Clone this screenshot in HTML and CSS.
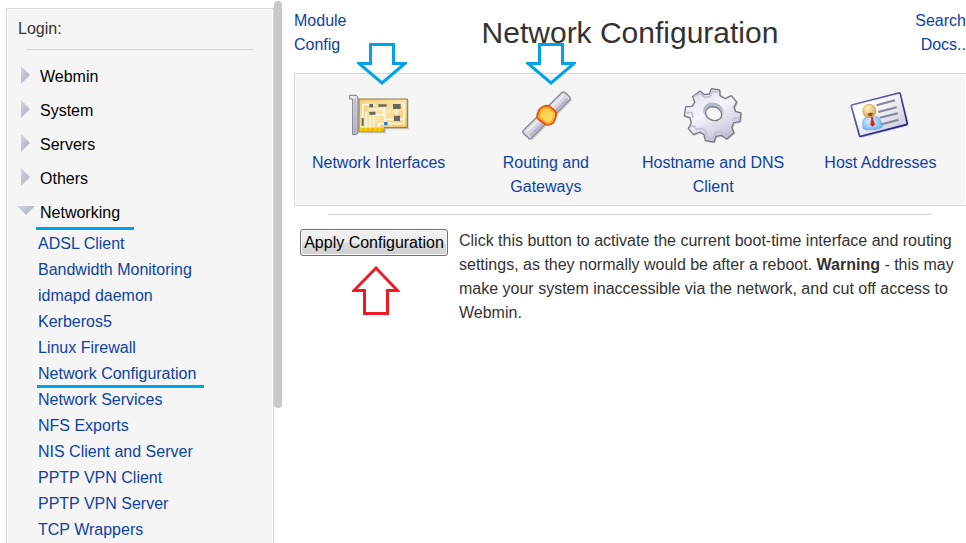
FILE: index.html
```html
<!DOCTYPE html>
<html lang="en">
<head>
    <meta charset="UTF-8">
    <meta name="viewport" content="width=device-width, initial-scale=1.0">
    <title>Network Configuration</title>
    <link rel="stylesheet" href="styles.css">
</head>
<body>
    <svg class="defs" width="0" height="0" aria-hidden="true">
        <defs>
            <linearGradient id="tri" x1="0" y1="0" x2="1" y2="1">
                <stop offset="0" stop-color="#d3d5df"/>
                <stop offset="1" stop-color="#a9adc0"/>
            </linearGradient>
            <linearGradient id="board" x1="0" y1="0" x2="1" y2="1">
                <stop offset="0" stop-color="#f5cf75"/>
                <stop offset="0.5" stop-color="#fae3a6"/>
                <stop offset="1" stop-color="#efbd55"/>
            </linearGradient>
            <linearGradient id="metal" x1="0" y1="0" x2="1" y2="1">
                <stop offset="0" stop-color="#f8f8fc"/>
                <stop offset="1" stop-color="#b4b4c8"/>
            </linearGradient>
            <linearGradient id="gem" x1="0" y1="0" x2="1" y2="1">
                <stop offset="0" stop-color="#ffc02a"/>
                <stop offset="1" stop-color="#ffe88c"/>
            </linearGradient>
            <linearGradient id="gear" x1="0" y1="0" x2="0.6" y2="1">
                <stop offset="0" stop-color="#d9d9e6"/>
                <stop offset="0.5" stop-color="#f6f6fd"/>
                <stop offset="1" stop-color="#c3c3d8"/>
            </linearGradient>
            <linearGradient id="card" x1="0" y1="0" x2="1" y2="1">
                <stop offset="0.3" stop-color="#ffffff"/>
                <stop offset="1" stop-color="#bfbfd6"/>
            </linearGradient>
            <linearGradient id="edge" x1="0" y1="0" x2="1" y2="1">
                <stop offset="0" stop-color="#7777bd"/>
                <stop offset="1" stop-color="#10108a"/>
            </linearGradient>
            <radialGradient id="face" cx="0.4" cy="0.3" r="0.7">
                <stop offset="0" stop-color="#fff0c4"/>
                <stop offset="1" stop-color="#dba550"/>
            </radialGradient>
            <radialGradient id="shirt" cx="0.4" cy="0.4" r="0.7">
                <stop offset="0" stop-color="#d8f0ff"/>
                <stop offset="1" stop-color="#69b3f5"/>
            </radialGradient>
        </defs>
    </svg>

    <div class="page">
        <nav class="sidebar">
            <div class="login">Login:</div>
            <hr>
            <ul class="groups">
                <li><a href="#"><svg class="tri" viewBox="0 0 20 20"><path d="M5 1L14 10L5 19Z" fill="url(#tri)"/></svg>Webmin</a></li>
                <li><a href="#"><svg class="tri" viewBox="0 0 20 20"><path d="M5 1L14 10L5 19Z" fill="url(#tri)"/></svg>System</a></li>
                <li><a href="#"><svg class="tri" viewBox="0 0 20 20"><path d="M5 1L14 10L5 19Z" fill="url(#tri)"/></svg>Servers</a></li>
                <li><a href="#"><svg class="tri" viewBox="0 0 20 20"><path d="M5 1L14 10L5 19Z" fill="url(#tri)"/></svg>Others</a></li>
                <li>
                    <a href="#"><svg class="tri" viewBox="0 0 20 20"><path d="M1 5H19L10 14Z" fill="url(#tri)"/></svg><span class="marked group-mark">Networking</span></a>
                    <ul class="modules">
                        <li><a href="#">ADSL Client</a></li>
                        <li><a href="#">Bandwidth Monitoring</a></li>
                        <li><a href="#">idmapd daemon</a></li>
                        <li><a href="#">Kerberos5</a></li>
                        <li><a href="#">Linux Firewall</a></li>
                        <li><a href="#" class="marked module-mark">Network Configuration</a></li>
                        <li><a href="#">Network Services</a></li>
                        <li><a href="#">NFS Exports</a></li>
                        <li><a href="#">NIS Client and Server</a></li>
                        <li><a href="#">PPTP VPN Client</a></li>
                        <li><a href="#">PPTP VPN Server</a></li>
                        <li><a href="#">TCP Wrappers</a></li>
                    </ul>
                </li>
            </ul>
        </nav>
        <div class="scrollbar"></div>

        <main class="content">
            <header class="header">
                <a href="#" class="config">Module Config</a>
                <h1>Network Configuration</h1>
                <a href="#" class="docs">Search Docs..</a>
            </header>

            <div class="icons">
                <a href="#" class="icon">
                    <svg class="picture" viewBox="27 12 180 180">
                        <path d="M60 60H206V148H138V160H62Z" fill="#000" opacity="0.18"/>
                        <path d="M57 57H202V143H132V155H57Z" fill="url(#board)" stroke="#8b7440" stroke-width="3"/>
                        <path d="M68 142V118M79 142V96M90 142V84M101 142V104H132V88H96M68 118V74H106M128 76H134V130M134 118H160M170 86V108M180 118H192V70H184M116 142V131H134M144 131H192V118" fill="none" stroke="#fff8e6" stroke-width="5"/>
                        <path d="M60 149H130" stroke="#f2d500" stroke-width="11"/>
                        <path d="M70 144V155M84 144V155M98 144V155M112 144V155M125 144V155" stroke="#ff9a1a" stroke-width="4"/>
                        <path d="M88 72H99V82H88ZM115 73H140V80H115ZM88 95H106V104H88ZM159 72H182V87H159ZM162 107H180V123H162ZM65 114H71V137H65Z" fill="#68655f"/>
                        <rect x="132" y="126" width="11" height="10" rx="3" fill="#1b78dc"/>
                        <path d="M29 46H49Q54 48 54 56V158Q52 164 46 164H38V57H29Z" fill="url(#metal)" stroke="#77777f" stroke-width="3"/>
                        <path d="M45 58V160" stroke="#a3a3b3" stroke-width="3"/>
                    </svg>
                    <span>Network Interfaces</span>
                    <svg class="arrow down" viewBox="0 0 50 42"><path d="M13.5 1.5H36.5V20.5H48L25 40L2 20.5H13.5Z"/></svg>
                </a>
                <a href="#" class="icon">
                    <svg class="picture" viewBox="18 12 180 180">
                        <path d="M42 162L165 42L187 60L66 182Z" fill="#000" opacity="0.15"/>
                        <path d="M39 152L155 38Q161 33 166 38L179 51Q183 56 178 61L64 175Q59 179 55 174L40 160Q36 156 39 152Z" fill="url(#metal)" stroke="#8b8b91" stroke-width="4"/>
                        <path d="M50 155L160 46" stroke="#fff" stroke-width="5" opacity="0.7"/>
                        <path d="M61 167L173 56" stroke="#a7a7bb" stroke-width="6" opacity="0.7"/>
                        <path d="M102 79Q110 75 118 79L134 92Q140 98 138 108L132 124Q129 131 121 133Q111 136 104 131L86 118Q80 112 82 104L88 89Q91 83 102 79Z" fill="url(#gem)" stroke="#e8500c" stroke-width="6" stroke-linejoin="round"/>
                        <path d="M104 85Q110 82 115 85L130 97Q133 101 131 107L127 119Q124 125 118 127Q112 128 107 125L91 113Q87 109 89 104L94 93Q97 88 104 85Z" fill="none" stroke="#ffad1f" stroke-width="4"/>
                    </svg>
                    <span>Routing and Gateways</span>
                    <svg class="arrow down second" viewBox="0 0 50 42"><path d="M13.5 1.5H36.5V20.5H48L25 40L2 20.5H13.5Z"/></svg>
                </a>
                <a href="#" class="icon">
                    <svg class="picture" viewBox="27 12 180 180">
                        <g stroke-linejoin="round">
                            <path transform="translate(4 4)" d="M112 26L137 30L138 47L154 56L172 47L188 66L180 82L184 94L201 99L198 125L180 128L173 142L180 158L158 177L142 166L126 169L120 186L94 182L90 164L78 156L58 164L43 145L52 130L48 113L31 108L35 80L54 79L62 67L56 50L78 33L92 44L106 42Z" fill="#000" opacity="0.15"/>
                            <path d="M112 26L137 30L138 47L154 56L172 47L188 66L180 82L184 94L201 99L198 125L180 128L173 142L180 158L158 177L142 166L126 169L120 186L94 182L90 164L78 156L58 164L43 145L52 130L48 113L31 108L35 80L54 79L62 67L56 50L78 33L92 44L106 42Z" fill="url(#gear)" stroke="#77777f" stroke-width="4"/>
                            <path d="M35 98L53 98L58 114M47 142L60 137L66 148L84 145L96 155L98 172L119 175L125 156L143 154L158 165L174 152M178 116L196 113M61 48L78 41L93 52L108 50L116 34L133 37" fill="none" stroke="#c0c0d4" stroke-width="5"/>
                        </g>
                        <ellipse cx="118" cy="94" rx="31" ry="26" transform="rotate(18 118 94)" fill="#b6b6ca"/>
                        <ellipse cx="119" cy="101" rx="28" ry="22" transform="rotate(18 119 101)" fill="#ededf7"/>
                        <ellipse cx="119" cy="101" rx="25" ry="20" transform="rotate(22 119 101)" fill="#f5f5f5" stroke="#77777f" stroke-width="4"/>
                    </svg>
                    <span>Hostname and DNS Client</span>
                </a>
                <a href="#" class="icon">
                    <svg class="picture" viewBox="24 12 180 180">
                        <path d="M33 80L176 42L201 137L57 174Z" fill="#000" opacity="0.15"/>
                        <path d="M29 75L170 39Q174 38 175 42L196 130Q196 133 193 134L56 169Q53 170 52 166L28 79Z" fill="url(#card)" stroke="url(#edge)" stroke-width="5" stroke-linejoin="round"/>
                        <path d="M104 76L159 61M109 96L164 82M113 113L168 100M120 133L170 119" stroke="#85859f" stroke-width="6"/>
                        <path d="M64 146Q58 122 72 112Q88 104 106 111Q121 122 120 142Q110 148 92 149Q72 151 64 146Z" fill="url(#shirt)" stroke="#4e9ee8" stroke-width="2"/>
                        <path d="M76 110L89 122L100 109Z" fill="#fff"/>
                        <path d="M84 110L95 110L93 118L99 133L92 140L85 134L87 118Z" fill="#dc2222"/>
                        <circle cx="82" cy="93" r="20" fill="url(#face)" stroke="#d69f4c" stroke-width="2"/>
                        <path d="M77 101Q84 96 93 99L90 108Q83 111 78 106Z" fill="#8a5a1c"/>
                    </svg>
                    <span>Host Addresses</span>
                </a>
            </div>

            <hr>

            <form class="apply">
                <div class="action">
                    <button type="button">Apply Configuration</button>
                    <svg class="arrow up" viewBox="0 0 48 50"><path d="M24 2L45.5 24.5H35.5V47.5H12.5V24.5H2Z"/></svg>
                </div>
                <p>Click this button to activate the current boot-time interface and routing settings, as they normally would be after a reboot. <b>Warning</b> - this may make your system inaccessible via the network, and cut off access to Webmin.</p>
            </form>
        </main>
    </div>
</body>
</html>
```

FILE: styles.css
```css
*{
    margin: 0;
    padding: 0;
    box-sizing: border-box;
}

html{
    overflow: hidden;
}
body{
    background-color: #fff;
    color: #333;
    font: 16px/24px "Liberation Sans", Arial, sans-serif;
}
a{
    color: #0d42a5;
    text-decoration: none;
}
ul{
    list-style: none;
}
hr{
    border: 0;
    border-top: 1px solid #d5d5d5;
}
.defs{
    position: absolute;
}

.page{
    display: flex;
    align-items: flex-start;
}

/* left menu */
.sidebar{
    flex: 0 0 268px;
    margin: 8px 0 0 6px;
    padding: 8px 9px 16px;
    border: 1px solid #d5d5d5;
    background-color: #f5f5f5;
    box-shadow: inset 0 0 0 1px #fff;
}
.login{
    padding-left: 2px;
}
.sidebar hr{
    margin: 8px 10px 10px;
}
.groups > li > a{
    display: flex;
    align-items: center;
    height: 34px;
    color: #000;
}
.tri{
    width: 20px;
    height: 20px;
    margin: 0 4px 4px 0;
}
.modules{
    padding: 1px 0 0 22px;
}
.modules li{
    line-height: 26px;
}
.marked{
    position: relative;
}
.marked::after{
    content: "";
    position: absolute;
    height: 3px;
    background-color: #00a2e8;
}
.group-mark::after{
    left: -4px;
    right: -14px;
    bottom: -5px;
}
.module-mark::after{
    left: -1px;
    right: -8px;
    bottom: -6px;
}

.scrollbar{
    flex: 0 0 8px;
    height: 407px;
    margin-top: 1px;
    border-radius: 4px;
    background-color: #c9c9c9;
}

/* right side */
.content{
    flex: 1;
    min-width: 0;
    margin-left: 12px;
    padding-top: 9px;
}
.header{
    display: grid;
    grid-template-columns: 1fr auto 1fr;
    align-items: center;
    margin-bottom: 16px;
}
h1{
    font-size: 30px;
    font-weight: normal;
}
.config,.docs{
    width: min-content;
}
.docs{
    justify-self: end;
    text-align: right;
}

.icons{
    display: grid;
    grid-template-columns: repeat(4, 1fr);
    padding: 10px 2px 6px 0;
    border: 1px solid #d5d5d5;
    border-right: 0;
    background-color: #f5f5f5;
    box-shadow: inset 0 0 0 1px #fff;
}
.icon{
    position: relative;
    display: flex;
    flex-direction: column;
    align-items: center;
    padding: 0 10px;
    text-align: center;
}
.picture{
    width: 60px;
    height: 60px;
    margin-bottom: 7px;
}
.content > hr{
    width: 90%;
    margin: 8px auto 14px;
}

/* hand drawn pointers */
.arrow{
    position: absolute;
    fill: none;
    stroke-width: 3px;
}
.down{
    top: -41px;
    left: calc(50% - 22px);
    width: 50px;
    height: 42px;
    stroke: #00a2e8;
}
.second{
    left: calc(50% - 20px);
}
.up{
    top: 37px;
    left: 52px;
    width: 48px;
    height: 50px;
    stroke: #ed1c24;
}

.apply{
    display: flex;
    align-items: flex-start;
    gap: 11px;
    padding-left: 6px;
}
.action{
    position: relative;
    flex: none;
}
button{
    display: block;
    width: 148px;
    height: 27px;
    border: 1px solid #707070;
    border-radius: 3px;
    background: linear-gradient(#f2f2f2, #ebebeb 50%, #dddddd 50%, #cfcfcf);
    box-shadow: inset 0 0 0 1px #fcfcfc;
    color: #000;
    font: inherit;
    white-space: nowrap;
}
```
